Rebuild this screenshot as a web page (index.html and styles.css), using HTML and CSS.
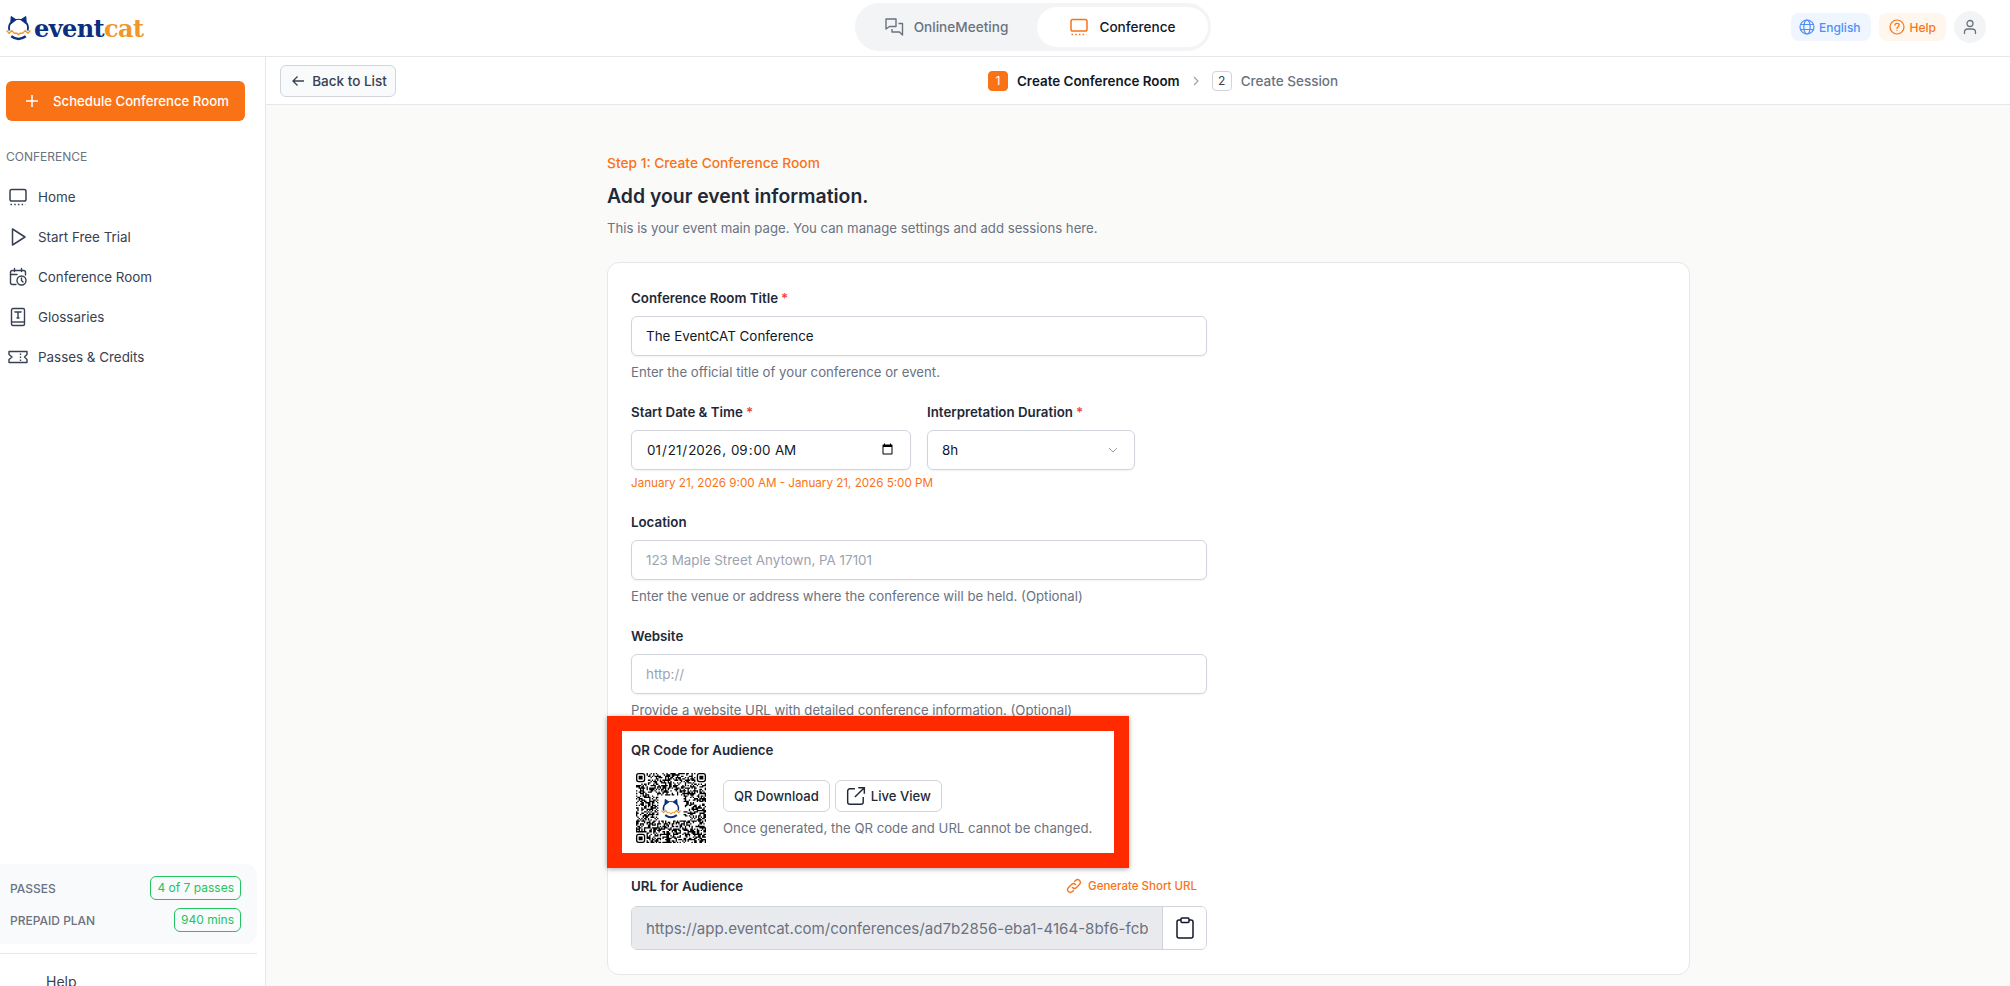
FILE: index.html
```html
<!DOCTYPE html>
<html lang="en">
<head>
    <meta charset="UTF-8">
    <meta name="viewport" content="width=device-width, initial-scale=1.0">
    <title>Create Conference Room - EventCAT</title>
    <link rel="stylesheet" href="styles.css">
    <script src="qr.js" defer></script>
</head>
<body>

<!-- shared icons -->
<svg class="icon-defs" width="0" height="0">
    <symbol id="cat" viewBox="0 0 24 25">
        <path d="M4.500 8.500 5 1.500 9.500 4.600ZM19.500 8.500 19 1.500 14.500 4.600Z" fill="#0b2f7e" stroke="#0b2f7e" stroke-width="1" stroke-linejoin="round"/>
        <path d="M9 4.500Q12 3.700 15 4.500" fill="none" stroke="#0b2f7e" stroke-width="1"/>
        <path d="M3.200 15C2.400 12 3 9.500 4.500 7.500M20.800 15C21.600 12 21 9.500 19.500 7.500" fill="none" stroke="#0b2f7e" stroke-width="1.800"/>
        <path d="M.5 15 3 17.500 5.500 15 8 17.500H10.500L12 19 13.500 17.500H16L18.500 15 21 17.500 23.500 15" fill="none" stroke="#f0962a" stroke-width="1.300"/>
        <path d="M5 20.500Q12 25.500 19 20.500" fill="none" stroke="#0b2f7e" stroke-width="2.400"/>
    </symbol>
    <symbol id="screen" viewBox="0 0 20 20">
        <rect x="2" y="2.500" width="16" height="11.500" rx="1.800" fill="none" stroke="currentColor" stroke-width="1.500"/>
        <path d="M2.500 17.500H17.500" fill="none" stroke="currentColor" stroke-width="1.300" stroke-dasharray="1.500 2.200"/>
    </symbol>
</svg>

<header class="topbar">
    <div class="logo">
        <svg class="logo-cat" width="25" height="26"><use href="#cat"/></svg>
        <span class="logo-text">event<span class="logo-accent">cat</span></span>
    </div>
    <nav class="mode-switch">
        <div class="mode-tab">
            <svg width="20" height="20" viewBox="0 0 20 20" fill="none" stroke="currentColor" stroke-width="1.400" stroke-linejoin="round">
                <path d="M2 2H12V9.500H5.500L2 12Z"/>
                <path d="M14.500 6.500H18.500V18L15.500 15H8V12"/>
            </svg>
            <span>OnlineMeeting</span>
        </div>
        <div class="mode-tab mode-tab-active">
            <svg class="mode-icon" width="20" height="20"><use href="#screen"/></svg>
            <span>Conference</span>
        </div>
    </nav>
    <div class="top-actions">
        <div class="pill pill-lang">
            <svg width="16" height="16" viewBox="0 0 16 16" fill="none" stroke="currentColor" stroke-width="1.200">
                <circle cx="8" cy="8" r="7"/>
                <ellipse cx="8" cy="8" rx="3.200" ry="7"/>
                <path d="M1.500 5.500H14.500M1.500 10.500H14.500"/>
            </svg>
            <span>English</span>
        </div>
        <div class="pill pill-help">
            <svg width="16" height="16" viewBox="0 0 16 16" fill="none" stroke="currentColor" stroke-width="1.200">
                <circle cx="8" cy="8" r="7"/>
                <path d="M5.900 6.200C6 3.600 10.200 3.700 10.200 6.100 10.200 7.800 8 7.800 8 9.600" stroke-linecap="round"/>
                <path d="M8 11.300V12"/>
            </svg>
            <span>Help</span>
        </div>
        <div class="avatar">
            <svg width="16" height="16" viewBox="0 0 16 16" fill="none" stroke="currentColor" stroke-width="1.300" stroke-linecap="round">
                <circle cx="8" cy="4.500" r="3"/>
                <path d="M2.500 14.500V13C2.500 11 4 10 6 10H10C12 10 13.500 11 13.500 13V14.500"/>
            </svg>
        </div>
    </div>
</header>

<div class="layout">
    <aside class="sidebar">
        <div class="side-top">
            <button class="schedule-btn" type="button">
                <svg width="14" height="14" viewBox="0 0 14 14" fill="none" stroke="currentColor" stroke-width="1.500">
                    <path d="M7 1V13M1 7H13"/>
                </svg>
                Schedule Conference Room
            </button>
            <div class="side-title">CONFERENCE</div>
            <ul class="side-nav">
                <li>
                    <svg width="20" height="20"><use href="#screen"/></svg>
                    Home
                </li>
                <li>
                    <svg width="20" height="20" viewBox="0 0 20 20" fill="none" stroke="currentColor" stroke-width="1.500" stroke-linejoin="round">
                        <path d="M4.500 2V18L17 10Z"/>
                    </svg>
                    Start Free Trial
                </li>
                <li>
                    <svg width="20" height="20" viewBox="0 0 20 20" fill="none" stroke="currentColor" stroke-width="1.400" stroke-linecap="round">
                        <path d="M8 17.500H4.500C3.300 17.500 2.500 16.700 2.500 15.500V5.500C2.500 4.300 3.300 3.500 4.500 3.500H15.500C16.700 3.500 17.500 4.300 17.500 5.500V8"/>
                        <path d="M6.500 1.500V4.500M13.500 1.500V4.500M2.500 7.500H9"/>
                        <circle cx="13.500" cy="13.500" r="4.500"/>
                        <path d="M13.500 11V13.500L15 15"/>
                    </svg>
                    Conference Room
                </li>
                <li>
                    <svg width="20" height="20" viewBox="0 0 20 20" fill="none" stroke="currentColor" stroke-width="1.400">
                        <rect x="3.500" y="1.500" width="13" height="17" rx="1.500"/>
                        <path d="M3.500 15H16.500"/>
                        <path d="M7 5.500V5H13V5.500M10 5V11M8.500 11H11.500"/>
                    </svg>
                    Glossaries
                </li>
                <li>
                    <svg width="20" height="20" viewBox="0 0 20 20" fill="none" stroke="currentColor" stroke-width="1.400" stroke-linejoin="round">
                        <path d="M1 4.500H19V7.500L16.500 10 19 12.500V15.500H1V12.500L4 10 1 7.500Z"/>
                        <path d="M12.500 6.500V8M12.500 9.500V11M12.500 12.500V14"/>
                    </svg>
                    Passes &amp; Credits
                </li>
            </ul>
        </div>
        <div class="plan-box">
            <div class="plan-row">
                <span>PASSES</span>
                <span class="plan-tag">4 of 7 passes</span>
            </div>
            <div class="plan-row">
                <span>PREPAID PLAN</span>
                <span class="plan-tag">940 mins</span>
            </div>
        </div>
        <div class="side-help">Help</div>
    </aside>

    <main class="content">
        <div class="subbar">
            <button class="back-btn" type="button">
                <svg width="14" height="14" viewBox="0 0 14 14" fill="none" stroke="currentColor" stroke-width="1.300">
                    <path d="M13 7H2M6.500 2.500 2 7 6.500 11.500"/>
                </svg>
                Back to List
            </button>
            <div class="steps">
                <span class="step-num step-num-active">1</span>
                <span class="step-name step-name-active">Create Conference Room</span>
                <svg class="step-arrow" width="8" height="10" viewBox="0 0 8 10" fill="none" stroke="currentColor" stroke-width="1.200">
                    <path d="M2 1 6 5 2 9"/>
                </svg>
                <span class="step-num">2</span>
                <span class="step-name">Create Session</span>
            </div>
        </div>

        <div class="page">
            <div class="step-caption">Step 1: Create Conference Room</div>
            <h2>Add your event information.</h2>
            <p class="page-desc">This is your event main page. You can manage settings and add sessions here.</p>

            <form class="card">
                <div class="field">
                    <label>Conference Room Title<span class="req">*</span></label>
                    <input type="text" value="The EventCAT Conference">
                    <div class="hint">Enter the official title of your conference or event.</div>
                </div>

                <div class="field-row">
                    <div class="field field-date">
                        <label>Start Date &amp; Time<span class="req">*</span></label>
                        <input type="datetime-local" value="2026-01-21T09:00">
                    </div>
                    <div class="field field-duration">
                        <label>Interpretation Duration<span class="req">*</span></label>
                        <div class="select-box">
                            <span>8h</span>
                            <svg width="10" height="6" viewBox="0 0 10 6" fill="none" stroke="#9ca3af" stroke-width="1">
                                <path d="M1 1 5 5 9 1"/>
                            </svg>
                        </div>
                    </div>
                </div>
                <div class="hint hint-date">January 21, 2026 9:00 AM - January 21, 2026 5:00 PM</div>

                <div class="field">
                    <label>Location</label>
                    <input type="text" placeholder="123 Maple Street Anytown, PA 17101">
                    <div class="hint">Enter the venue or address where the conference will be held. (Optional)</div>
                </div>

                <div class="field">
                    <label>Website</label>
                    <input type="text" placeholder="http://">
                    <div class="hint">Provide a website URL with detailed conference information. (Optional)</div>
                </div>

                <div class="qr-block">
                    <label>QR Code for Audience</label>
                    <div class="qr-row">
                        <div class="qr-code">
                            <svg width="70" height="70" viewBox="0 0 53 53">
                                <path id="qr-path" fill="#000"/>
                            </svg>
                            <svg class="qr-cat" width="20" height="21"><use href="#cat"/></svg>
                        </div>
                        <div class="qr-side">
                            <div class="qr-buttons">
                                <button class="light-btn" type="button">QR Download</button>
                                <button class="light-btn" type="button">
                                    <svg width="20" height="20" viewBox="0 0 18 18" fill="none" stroke="currentColor" stroke-width="1.300">
                                        <path d="M8 2.500H3.500C2.400 2.500 1.500 3.400 1.500 4.500V14.500C1.500 15.600 2.400 16.500 3.500 16.500H13.500C14.600 16.500 15.500 15.600 15.500 14.500V10"/>
                                        <path d="M11 1.500H16.500V7M16.500 1.500 8 10"/>
                                    </svg>
                                    Live View
                                </button>
                            </div>
                            <div class="hint">Once generated, the QR code and URL cannot be changed.</div>
                        </div>
                    </div>
                </div>

                <div class="url-field">
                    <div class="url-head">
                        <label>URL for Audience</label>
                        <span class="short-url">
                            <svg width="16" height="16" viewBox="0 0 16 16" fill="none" stroke="currentColor" stroke-width="1.300" stroke-linecap="round">
                                <path d="M6.500 9.500C7.800 10.800 9.500 10.500 10.500 9.500L13.500 6.500C16 3.500 12.500 0 9.500 2.500L8.500 3.500"/>
                                <path d="M9.500 6.500C8.200 5.200 6.500 5.500 5.500 6.500L2.500 9.500C0 12.500 3.500 16 6.500 13.500L7.500 12.500"/>
                            </svg>
                            Generate Short URL
                        </span>
                    </div>
                    <div class="url-box">
                        <input type="text" readonly value="https://app.eventcat.com/conferences/ad7b2856-eba1-4164-8bf6-fcb0c1d2e3f4">
                        <button class="copy-btn" type="button">
                            <svg width="20" height="24" viewBox="0 0 20 24" fill="none" stroke="#111827" stroke-width="1.500" stroke-linejoin="round">
                                <path d="M6 4H4C2.900 4 2 4.900 2 6V20C2 21.100 2.900 22 4 22H16C17.100 22 18 21.100 18 20V6C18 4.900 17.100 4 16 4H14"/>
                                <rect x="6" y="2" width="8" height="4.500" rx="1"/>
                            </svg>
                        </button>
                    </div>
                </div>
            </form>
        </div>
    </main>
</div>

</body>
</html>
```

FILE: styles.css
```css
* {
    margin: 0;
    padding: 0;
    box-sizing: border-box;
}

body {
    font-family: Inter, 'Liberation Sans', sans-serif;
    font-size: 14px;
    background-color: #ffffff;
    color: #111827;
    height: 100vh;
    overflow: hidden;
}

button {
    font-family: inherit;
}

.icon-defs {
    position: absolute;
}

/* top bar */
.topbar {
    height: 57px;
    display: flex;
    align-items: flex-start;
    border-bottom: 1px solid #e5e7eb;
    padding-right: 24px;
}

.logo {
    width: 855px;
    height: 56px;
    display: flex;
    align-items: center;
    padding-left: 6px;
    gap: 3px;
}

.logo-text {
    font-family: 'DejaVu Serif', serif;
    font-weight: bold;
    font-size: 24px;
    letter-spacing: -0.6px;
    color: #0b2f7e;
}

.logo-accent {
    color: #f0962a;
}

.mode-switch {
    display: flex;
    margin-top: 3px;
    height: 48px;
    width: 356px;
    padding: 4px 3px 4px 0;
    background-color: #f3f4f6;
    border-radius: 24px;
}

.mode-tab {
    flex: 1;
    display: flex;
    align-items: center;
    justify-content: center;
    gap: 10px;
    font-size: 13.600px;
    font-weight: 500;
    color: #6b7280;
    border-radius: 20px;
}

.mode-tab-active {
    flex: 0 0 171px;
    background-color: #ffffff;
    color: #111827;
}

.mode-icon {
    color: #f97316;
}

.top-actions {
    margin-left: auto;
    display: flex;
    align-items: center;
    height: 54px;
    gap: 8px;
}

.pill {
    display: flex;
    align-items: center;
    gap: 5px;
    height: 28px;
    padding: 0 10px;
    border-radius: 8px;
    font-size: 12px;
    font-weight: 500;
}

.pill-lang {
    gap: 4px;
    padding-left: 8px;
    background-color: #eff6ff;
    color: #4f8ff7;
}

.pill-help {
    background-color: #fff7ed;
    color: #f97316;
}

.avatar {
    width: 32px;
    height: 32px;
    border-radius: 50%;
    background-color: #f3f4f6;
    color: #6b7280;
    display: flex;
    align-items: center;
    justify-content: center;
}

/* page layout */
.layout {
    display: flex;
    height: calc(100vh - 57px);
}

.sidebar {
    width: 266px;
    flex-shrink: 0;
    border-right: 1px solid #e5e7eb;
    overflow: hidden;
}

.side-top {
    height: 807px;
    padding: 24px 20px 0 6px;
}

.schedule-btn {
    width: 239px;
    height: 40px;
    display: flex;
    align-items: center;
    gap: 14px;
    padding-left: 19px;
    background-color: #f97316;
    color: white;
    border: none;
    border-radius: 6px;
    font-size: 13.200px;
    font-weight: 500;
}

.side-title {
    margin-top: 28px;
    font-size: 12px;
    line-height: 16px;
    color: #6b7280;
}

.side-nav {
    list-style: none;
    margin-top: 12px;
}

.side-nav li {
    height: 40px;
    display: flex;
    align-items: center;
    gap: 10px;
    padding-left: 2px;
    font-size: 13.400px;
    color: #374151;
}

.plan-box {
    width: 257px;
    height: 80px;
    padding: 12px 16px 0 10px;
    background-color: #f9fafb;
    border-radius: 0 12px 12px 0;
}

.plan-row {
    display: flex;
    justify-content: space-between;
    align-items: center;
    height: 24px;
    margin-bottom: 8px;
    font-size: 12px;
    font-weight: 500;
    color: #6b7280;
}

.plan-tag {
    line-height: 22px;
    padding: 0 6px;
    border: 1px solid #22c55e;
    border-radius: 6px;
    color: #22c55e;
    font-weight: 400;
}

.side-help {
    width: 257px;
    margin-top: 9px;
    border-top: 1px solid #e5e7eb;
    padding: 18px 0 0 46px;
    color: #374151;
    line-height: 20px;
}

/* main column */
.content {
    flex: 1;
    background-color: #fafaf9;
    min-width: 0;
}

.subbar {
    height: 48px;
    display: flex;
    align-items: center;
    padding-left: 14px;
    background-color: #ffffff;
    border-bottom: 1px solid #e5e7eb;
}

.back-btn {
    width: 116px;
    height: 32px;
    display: flex;
    align-items: center;
    justify-content: center;
    gap: 7px;
    padding-left: 2px;
    background-color: #f9fafb;
    border: 1px solid #d1d5db;
    border-radius: 6px;
    color: #374151;
    font-size: 13.500px;
    font-weight: 500;
}

.steps {
    display: flex;
    align-items: center;
    margin-left: 592px;
    font-size: 13.500px;
}

.step-num {
    width: 20px;
    height: 20px;
    display: flex;
    align-items: center;
    justify-content: center;
    border: 1px solid #d1d5db;
    border-radius: 4px;
    font-size: 12px;
    color: #374151;
}

.step-num-active {
    background-color: #f97316;
    border-color: #f97316;
    color: white;
}

.step-name {
    margin-left: 9px;
    font-weight: 500;
    color: #6b7280;
}

.step-name-active {
    color: #111827;
    font-size: 13.400px;
    font-weight: 600;
}

.step-arrow {
    margin: 0 12px 0 12px;
    color: #9ca3af;
}

.page {
    width: 1083px;
    margin-left: 341px;
    padding-top: 50px;
}

.step-caption {
    font-size: 13.750px;
    line-height: 16px;
    font-weight: 500;
    color: #f97316;
}

h2 {
    margin-top: 13px;
    font-size: 19.400px;
    line-height: 24px;
    font-weight: 600;
    color: #1f2937;
}

.page-desc {
    margin-top: 11px;
    font-size: 13.200px;
    line-height: 18px;
    color: #6b7280;
}

.card {
    margin-top: 25px;
    height: 713px;
    padding: 25px 23px 0;
    background-color: #ffffff;
    border: 1px solid #e5e7eb;
    border-radius: 12px;
}

.field {
    width: 576px;
    margin-bottom: 20px;
}

label {
    display: block;
    height: 20px;
    margin-bottom: 8px;
    line-height: 20px;
    font-size: 13.300px;
    font-weight: 600;
    color: #1f2937;
}

.req {
    margin-left: 3px;
    color: #ef4444;
}

input {
    width: 100%;
    height: 40px;
    padding: 0 14px;
    border: 1px solid #d1d5db;
    border-radius: 6px;
    background-color: #ffffff;
    font-family: inherit;
    font-size: 13.400px;
    color: #111827;
    box-shadow: 0 1px 2px rgba(0, 0, 0, 0.05);
}

input::placeholder {
    color: #9ca3af;
}

.hint {
    margin-top: 6px;
    font-size: 13.200px;
    line-height: 20px;
    color: #6b7280;
}

.field-row {
    display: flex;
    gap: 16px;
}

.field-row .field {
    margin-bottom: 0;
}

.field-date {
    width: 280px;
}

.field-duration {
    width: 208px;
}

.select-box {
    height: 40px;
    display: flex;
    align-items: center;
    justify-content: space-between;
    padding: 0 16px 0 14px;
    border: 1px solid #d1d5db;
    border-radius: 6px;
    font-size: 13.400px;
    box-shadow: 0 1px 2px rgba(0, 0, 0, 0.05);
}

.hint-date {
    margin: 5px 0 21px;
    font-size: 11.650px;
    line-height: 16px;
    color: #f97316;
}

/* boxed QR section */
.qr-block {
    position: relative;
    width: 522px;
    height: 152px;
    margin: -24px 0 0 -24px;
    padding: 9px 0 0 9px;
    border: 15px solid #ff2a00;
    background-color: #ffffff;
    box-shadow: 0 1px 5px rgba(0, 0, 0, 0.35);
}

.qr-row {
    display: flex;
    align-items: flex-start;
    gap: 17px;
    margin-top: -15px;
    padding-top: 20px;
}

.qr-code {
    position: relative;
    width: 70px;
    height: 70px;
    margin-left: 5px;
}

.qr-code svg {
    display: block;
}

.qr-cat {
    position: absolute;
    top: 25px;
    left: 25px;
}

.qr-side {
    padding-top: 7px;
}

.qr-buttons {
    display: flex;
    gap: 5px;
}

.light-btn {
    height: 32px;
    display: flex;
    align-items: center;
    gap: 5px;
    padding: 0 10px;
    background-color: #ffffff;
    border: 1px solid #d1d5db;
    border-radius: 6px;
    font-size: 13.100px;
    font-weight: 500;
    color: #1f2937;
}

.url-field {
    width: 576px;
    margin-top: 8px;
}

.url-head {
    display: flex;
    justify-content: space-between;
}

.short-url {
    display: flex;
    align-items: center;
    gap: 6px;
    height: 20px;
    padding-right: 10px;
    font-size: 11.500px;
    font-weight: 500;
    color: #f97316;
}

.url-box {
    display: flex;
    height: 44px;
    margin-top: 2px;
    border: 1px solid #d1d5db;
    border-radius: 6px;
    overflow: hidden;
}

.url-box input {
    flex: 1;
    min-width: 0;
    height: 100%;
    border: none;
    border-radius: 0;
    background-color: #e9eaee;
    color: #6b7280;
    font-size: 15.100px;
    box-shadow: none;
    outline: none;
}

.copy-btn {
    width: 44px;
    display: flex;
    align-items: center;
    justify-content: center;
    background-color: #ffffff;
    border: none;
    border-left: 1px solid #d1d5db;
}
```

FILE: qr.js
```js
document.addEventListener("DOMContentLoaded", function () {
    const size = 53;
    const centerFrom = 17;
    const centerTo = 35;
    let seed = 0x2f6e2b1;
    let d = "";

    // Finder marks sit in three corners, quiet row around them
    function inFinder(x, y) {
        const left = x < 8;
        const right = x >= size - 8;
        const top = y < 8;
        const bottom = y >= size - 8;
        return (left && top) || (right && top) || (left && bottom);
    }

    function nextBit() {
        seed ^= seed << 13;
        seed ^= seed >>> 17;
        seed ^= seed << 5;
        return (seed >>> 7) & 1;
    }

    function finder(x, y) {
        d += `M${x + 2} ${y}h3a2 2 0 0 1 2 2v3a2 2 0 0 1 -2 2h-3a2 2 0 0 1 -2 -2v-3a2 2 0 0 1 2 -2z`;
        d += `M${x + 2} ${y + 1}a1 1 0 0 0 -1 1v3a1 1 0 0 0 1 1h3a1 1 0 0 0 1 -1v-3a1 1 0 0 0 -1 -1z`;
        d += `M${x + 2} ${y + 2}h3v3h-3z`;
    }

    for (let y = 0; y < size; y++) {
        for (let x = 0; x < size; x++) {
            const bit = nextBit();
            if (inFinder(x, y)) continue;
            if (x >= centerFrom && x <= centerTo && y >= centerFrom && y <= centerTo) continue;
            if (bit) d += `M${x} ${y}h1v1h-1z`;
        }
    }

    finder(0, 0);
    finder(size - 7, 0);
    finder(0, size - 7);

    const path = document.getElementById("qr-path");
    path.setAttribute("d", d);
    path.setAttribute("fill-rule", "evenodd");
});
```
